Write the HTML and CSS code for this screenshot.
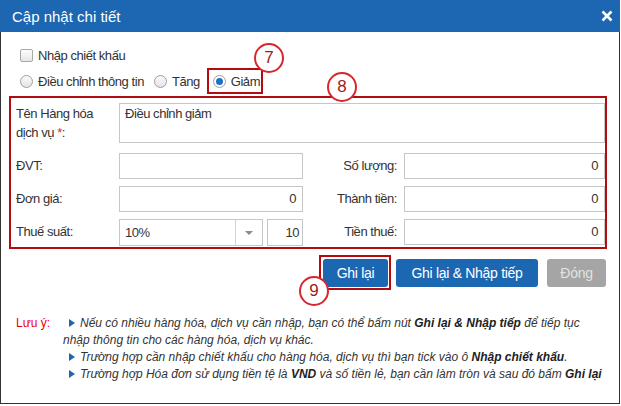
FILE: index.html
```html
<!DOCTYPE html>
<html lang="vi">

<head>
  <meta charset="utf-8" />
  <title>Cập nhật chi tiết</title>
  <link rel="stylesheet" href="styles.css">
</head>

<body>
  <div class="dialog">
    <div class="dialog-head">
      <span class="dialog-title">Cập nhật chi tiết</span>
      <span class="dialog-close">
        <svg width="12" height="12" viewBox="0 0 12 12">
          <path d="M1.5 1.5 L10.5 10.5 M10.5 1.5 L1.5 10.5" stroke="#fff" stroke-width="2.6" />
        </svg>
      </span>
    </div>

    <div class="dialog-body">
      <label class="opt">
        <span class="checkbox"></span>
        Nhập chiết khấu
      </label>

      <div class="radios">
        <label class="opt"><span class="radio"></span>Điều chỉnh thông tin</label>
        <label class="opt"><span class="radio"></span>Tăng</label>
        <label class="opt marked"><span class="radio checked"></span>Giảm</label>
      </div>

      <div class="detail">
        <div class="lbl lbl-top">Tên Hàng hóa<br>dịch vụ <span class="req">*</span>:</div>
        <div class="field wide">
          <div class="textarea">Điều chỉnh giảm</div>
        </div>

        <div class="lbl">ĐVT:</div>
        <div class="input"></div>
        <div class="lbl lbl-right">Số lượng:</div>
        <div class="input num">0</div>

        <div class="lbl">Đơn giá:</div>
        <div class="input num">0</div>
        <div class="lbl lbl-right">Thành tiền:</div>
        <div class="input num">0</div>

        <div class="lbl">Thuế suất:</div>
        <div class="tax">
          <div class="select">
            <span class="select-val">10%</span>
            <span class="select-arrow"></span>
          </div>
          <div class="input num small">10</div>
        </div>
        <div class="lbl lbl-right">Tiền thuế:</div>
        <div class="input num">0</div>
      </div>

      <div class="actions">
        <button class="btn marked-btn">Ghi lại</button>
        <button class="btn">Ghi lại &amp; Nhập tiếp</button>
        <button class="btn btn-off">Đóng</button>
      </div>

      <div class="notes">
        <div class="notes-title">Lưu ý:</div>
        <div class="notes-list">
          <p><span class="tri"></span>Nếu có nhiều hàng hóa, dịch vụ cần nhập, bạn có thể bấm nút <b>Ghi lại &amp; Nhập tiếp</b> để tiếp tục nhập thông tin cho các hàng hóa, dịch vụ khác.</p>
          <p><span class="tri"></span>Trường hợp cần nhập chiết khấu cho hàng hóa, dịch vụ thì bạn tick vào ô <b>Nhập chiết khấu</b>.</p>
          <p><span class="tri"></span>Trường hợp Hóa đơn sử dụng tiền tệ là <b>VND</b> và số tiền lẻ, bạn cần làm tròn và sau đó bấm <b>Ghi lại</b></p>
        </div>
      </div>
    </div>

    <span class="step step-7">7</span>
    <span class="step step-8">8</span>
    <span class="step step-9">9</span>
  </div>
</body>

</html>
```

FILE: styles.css
```css
body {
  margin: 0;
  font-family: "Liberation Sans", Arial, sans-serif;
  color: #333;
  background: #fff;
}

.dialog {
  position: relative;
  width: 620px;
  height: 404px;
  box-sizing: border-box;
  border: 1px solid #333;
  border-top: 0;
}

.dialog-head {
  height: 32px;
  background: #1d66b1;
  display: flex;
  align-items: center;
  justify-content: space-between;
  padding: 0 6px 0 12px;
  margin: 0 -1px;
}

.dialog-title {
  color: #fff;
  font-size: 15px;
  padding-top: 1px;
}

.dialog-close {
  width: 14px;
  height: 14px;
  display: flex;
  align-items: center;
  justify-content: center;
}

.dialog-body {
  padding: 13px 13px 0 7px;
}

/* form text: Arial at 13px, set a little tighter */
.opt,
.lbl,
.input,
.textarea,
.select {
  font-size: 13px;
  letter-spacing: -0.45px;
}

.opt {
  display: inline-flex;
  align-items: center;
  height: 20px;
  color: #333;
  padding-left: 12px;
  gap: 5px;
}

.checkbox {
  width: 11px;
  height: 11px;
  border: 1px solid #a8a8a8;
  border-radius: 2px;
  background: linear-gradient(#fdfdfd, #e6e6e6);
}

.radios {
  margin-top: 6px;
  display: flex;
  height: 20px;
}

.radios .opt+.opt {
  padding-left: 10px;
}

.radio {
  width: 11px;
  height: 11px;
  border: 1px solid #a0a0a0;
  border-radius: 50%;
  background: linear-gradient(#fbfbfb, #e4e4e4);
  position: relative;
}

.radio.checked {
  background: #fff;
}

.radio.checked::after {
  content: "";
  position: absolute;
  left: 2px;
  top: 2px;
  width: 7px;
  height: 7px;
  border-radius: 50%;
  background: #1f6fc7;
}

.radios .marked {
  position: relative;
  margin-left: 3px;
}

.marked::after {
  content: "";
  position: absolute;
  left: 4px;
  right: -3px;
  top: -4px;
  bottom: -2px;
  border: 2px solid #b30c10;
}

.detail {
  margin-top: 4px;
  margin-left: 1px;
  border: 2px solid #b30c10;
  padding: 5px 5px 2px 5px;
  display: grid;
  grid-template-columns: 103px 184px 101px 201px;
  grid-template-rows: 43px;
  grid-auto-rows: 26px;
  row-gap: 7px;
  width: 598px;
  box-sizing: border-box;
}

.lbl {
  color: #333;
  display: flex;
  align-items: center;
}

.lbl-top {
  display: block;
  line-height: 19px;
  padding-top: 1px;
}

.lbl-right {
  justify-content: flex-end;
  padding-right: 7px;
}

.req {
  color: #e22;
}

.field.wide {
  grid-column: 2 / 5;
}

.textarea {
  height: 40px;
  box-sizing: border-box;
  border: 1px solid #c6c6c6;
  padding: 2px 5px;
  line-height: 16px;
}

.input {
  border: 1px solid #c6c6c6;
  box-sizing: border-box;
  height: 26px;
  display: flex;
  align-items: center;
  padding: 0 6px;
}

.num {
  justify-content: flex-end;
}

.tax {
  display: flex;
  gap: 4px;
}

.select {
  width: 144px;
  height: 27px;
  box-sizing: border-box;
  border: 1px solid #c6c6c6;
  display: flex;
}

.select-val {
  flex: 1;
  display: flex;
  align-items: center;
  padding-left: 5px;
}

.select-arrow {
  width: 26px;
  border-left: 1px solid #d4d4d4;
  position: relative;
}

.select-arrow::after {
  content: "";
  position: absolute;
  left: 9px;
  top: 11px;
  border-left: 4px solid transparent;
  border-right: 4px solid transparent;
  border-top: 4px solid #8a8a8a;
}

.input.small {
  width: 36px;
  height: 27px;
  padding: 0 3px;
}

.actions {
  display: flex;
  justify-content: flex-end;
  gap: 8px;
  margin-top: 10px;
}

.btn {
  font-family: "Liberation Sans", Arial, sans-serif;
  font-size: 14px;
  letter-spacing: -0.3px;
  white-space: nowrap;
  height: 28px;
  border: 0;
  border-radius: 3px;
  background: #1c67b2;
  color: #fff;
  padding: 0;
}

.btn:nth-child(1) {
  width: 65px;
}

.btn:nth-child(2) {
  width: 142px;
}

.btn-off {
  background: #a5a5a5;
  color: #e2e2e2;
  width: 59px;
  margin-left: 1px;
}

.marked-btn {
  position: relative;
}

.marked-btn::after {
  content: "";
  position: absolute;
  left: -4px;
  right: -3px;
  top: -4px;
  bottom: -3px;
  border: 2px solid #b30c10;
}

.notes {
  display: flex;
  margin-top: 28px;
  font-size: 12px;
  line-height: 17px;
}

.notes-title {
  width: 47px;
  color: #e00;
  padding-left: 8px;
  flex: none;
}

.notes-list {
  width: 541px;
  font-style: italic;
}

.notes-list p {
  margin: 0;
  text-indent: 6px;
}

.notes-list b {
  color: #222;
}

.tri {
  display: inline-block;
  width: 0;
  height: 0;
  border-top: 4px solid transparent;
  border-bottom: 4px solid transparent;
  border-left: 6px solid #1d66b1;
  margin-right: 5px;
}

.step {
  position: absolute;
  width: 30px;
  height: 30px;
  box-sizing: border-box;
  border: 2px solid #d8262d;
  border-radius: 50%;
  background: #fff;
  color: #a11c20;
  font-size: 17px;
  display: flex;
  align-items: center;
  justify-content: center;
}

.step-7 {
  left: 253px;
  top: 43px;
}

.step-8 {
  left: 326px;
  top: 72px;
}

.step-9 {
  left: 298px;
  top: 276px;
}
```
